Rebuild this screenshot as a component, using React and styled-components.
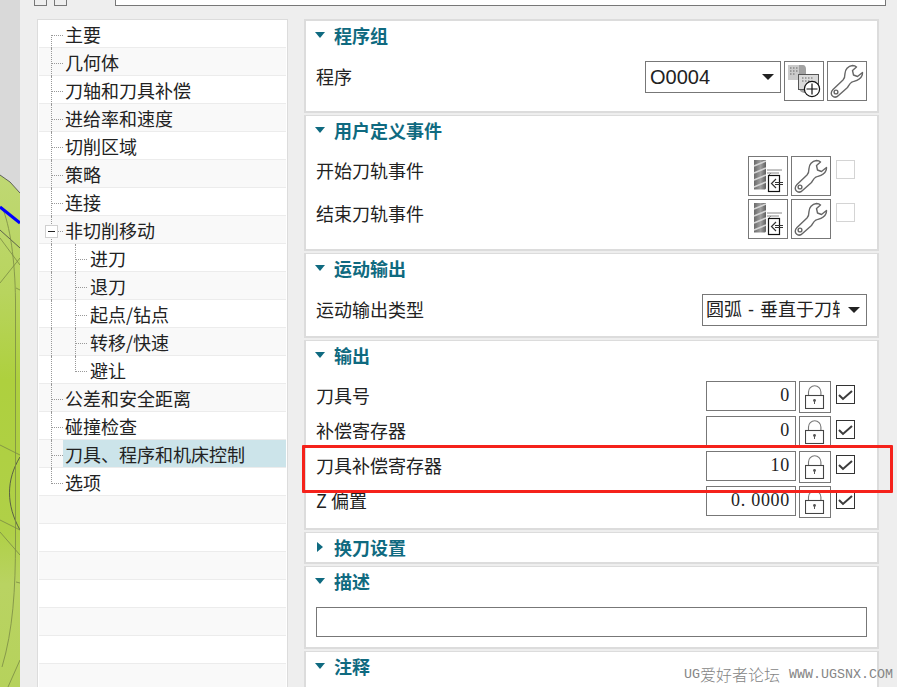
import React from "react";
import styled, { createGlobalStyle } from "styled-components";

const Global = createGlobalStyle`
  html, body { margin: 0; padding: 0; height: 100%; overflow: hidden; background: #eeeeee; }
  body { font-family: "Noto Sans CJK SC", "Liberation Sans", sans-serif; color: #1c1c1c; }
`;
const Page = styled.div`
  position: relative; width: 897px; height: 687px; display: flex; overflow: hidden; background: #eeeeee;
`;
const Canvas = styled.svg`
  flex: 0 0 20px; width: 20px; height: 687px; display: block;
`;
const Dialog = styled.div`
  flex: 1; min-width: 0; display: flex; flex-direction: column; background: #eeeeee;
`;
const TopBar = styled.div`
  height: 6px; flex: 0 0 6px; display: flex; align-items: flex-end; padding-left: 14px; gap: 7px; overflow: hidden;
`;
const TinyButton = styled.div`
  width: 11px; height: 12px; flex: none; border: 1px solid #777; background: #eee;
`;
const TopInput = styled.div`
  width: 771px; height: 10px; margin-left: 41px; flex: none; box-sizing: border-box; border: 1px solid #777; background: #fff;
`;
const Columns = styled.div`
  flex: 1; min-height: 0; display: flex; padding: 13px 0 0 17px; gap: 16px; overflow: hidden;
`;
const Tree = styled.div`
  flex: 0 0 251px; box-sizing: border-box; width: 251px; height: 670px; border: 1px solid #dcdcdc; background: #fff; padding: 0 1px; overflow: hidden;
`;
const Row = styled.div`
  position: relative; box-sizing: border-box; height: 28px; border-bottom: 1px solid #ececec;
  background: ${p => (p.$odd ? "#f9f9f9" : "#fff")};
  padding-left: ${p => (p.$sub ? 51 : 26)}px;
  font-size: 18px; line-height: 29px; white-space: nowrap; color: #222;
`;
const RowLabel = styled.span`
  display: block; height: 27px; margin-left: -2px; padding-left: 2px;
  background: ${p => (p.$selected ? "#cce4ea" : "transparent")};
`;
const Guide = styled.i`
  position: absolute; display: block; border-left: 1px dotted #999;
  left: ${p => p.$x}px; top: ${p => p.$top}px; height: ${p => p.$h}px; width: 0;
`;
const Dash = styled.i`
  position: absolute; display: block; border-top: 1px dotted #999;
  left: ${p => p.$x}px; top: 15px; width: ${p => p.$w}px; height: 0;
`;
const Expander = styled.i`
  position: absolute; left: 6px; top: 9px; width: 11px; height: 11px; border: 1px solid #d0d0d0; background: #fff; z-index: 1;
  &::after { content: ""; position: absolute; left: 2px; right: 2px; top: 5px; height: 1px; background: #222; }
`;
const Panels = styled.div`
  flex: 0 0 575px; width: 575px; display: flex; flex-direction: column; gap: 2px;
`;
const Section = styled.section`
  box-sizing: border-box; flex: none; height: ${p => p.$h}px; background: #fff; border: 1px solid #dcdcdc;
  border-width: ${p => (p.$first ? 2 : 1)}px 2px 2px 2px; padding: 0 10px; overflow: hidden;
`;
const Header = styled.div`
  display: flex; align-items: center; height: 27px; gap: 9px; margin: 0 0 13px -1px; font-size: 18px; font-weight: 700; color: #0f6a80;
`;
const Tri = styled.span`
  flex: none; width: 10px; display: flex; justify-content: center;
  ${p => p.$closed
    ? "&::before{content:'';border-left:6px solid #0f6a80;border-top:5px solid transparent;border-bottom:5px solid transparent;}"
    : "&::before{content:'';border-top:6px solid #0f6a80;border-left:5px solid transparent;border-right:5px solid transparent;}"}
`;
const Field = styled.div`
  display: flex; align-items: flex-start; justify-content: space-between; height: ${p => p.$h}px; font-size: 18px; line-height: ${p => p.$lh || 28}px; color: #222; white-space: nowrap;
`;
const Controls = styled.div`
  display: flex; align-items: flex-start; gap: 3px;
`;
const IconButton = styled.div`
  box-sizing: border-box; width: 40px; height: 40px; border: 1px solid #777; background: #fff; display: flex; align-items: center; justify-content: center; flex: none;
`;
const LockButton = styled(IconButton)`
  width: 32px; height: 32px;
`;
const Select = styled.div`
  box-sizing: border-box; width: ${p => p.$w}px; height: 32px; border: 1px solid #777; background: #fff; padding-left: ${p => p.$pl}px; padding-right: 6px; display: flex; align-items: center; font-size: ${p => p.$fs}px; line-height: 29px; color: #222; overflow: hidden; font-family: "Liberation Sans", "Noto Sans CJK SC", sans-serif;
  &::after { content: ""; flex: none; margin-left: 8px; border-top: 6px solid #222; border-left: 6px solid transparent; border-right: 6px solid transparent; }
`;
const SelectText = styled.span`
  flex: 1; min-width: 0; overflow: hidden; white-space: nowrap; word-spacing: 1px;
`;
const Check = styled.div`
  box-sizing: border-box; flex: none; width: 19px; height: 19px; margin: 4px 12px 0 2px; border: 1px solid ${p => (p.$off ? "#d4d4d4" : "#333")}; background: #fff; display: flex; align-items: center; justify-content: center;
`;
const NumBox = styled.div`
  box-sizing: border-box; width: 90px; height: 30px; border: 1px solid #777; background: #fff; text-align: right; padding-right: 5px; font-family: "Liberation Serif", "Noto Sans CJK SC", serif; font-size: 18px; letter-spacing: 0.7px; line-height: 27px; color: #222; flex: none;
`;
const TextBox = styled.div`
  box-sizing: border-box; height: 30px; border: 1px solid #777; background: #fff;
`;
const Highlight = styled.div`
  position: absolute; left: 302px; top: 445px; width: 591px; height: 48px; box-sizing: border-box; border: 3px solid #f5221b; border-radius: 1px; pointer-events: none;
`;
const Watermark = styled.div`
  position: absolute; left: 684px; top: 664px; display: flex; align-items: center; height: 20px; font-family: "Liberation Mono", monospace; font-size: 13.33px; color: #858585; white-space: pre;
`;
const WatermarkCjk = styled.span`
  font-family: "Noto Sans CJK SC", sans-serif; font-size: 16px; font-weight: 300; margin-right: 9px;
`;

const Wrench = () => (
  <svg width="34" height="34" viewBox="0 0 34 34" fill="#fff" stroke="#666" strokeWidth="1.4" strokeLinejoin="round">
    <path d="M22.5 1.5C18 2 15 5.5 15 9.5C15 12.5 15 14 13 16L3 25.5C0.5 28 1 31 2.5 32C4 33.5 6.5 33.5 8.5 31.5L17.5 23.5C19 21.5 19.5 19.5 22 18C24 17 30 17 32 11.5C32.5 10.5 32.5 9.5 32.5 8.5L27.5 12.5L23.5 11L22.5 6.5L26.5 3C25.5 2 24 1.5 22.5 1.5Z" />
    <circle cx="6" cy="28" r="1.900" />
  </svg>
);
const ProgramIcon = () => (
  <svg width="34" height="34" viewBox="0 0 34 34">
    <rect x="1" y="1" width="15" height="15" fill="#cbcbcb" />
    <path d="M12 1h4c2 0 3 2 3 4v24c-4 0-7-2-7-5z" fill="#a2a2a2" />
    <rect x="11.500" y="10.500" width="20" height="15" fill="#dadada" stroke="#555" strokeWidth="1" />
    <path d="M3 4h8M3 7h8M3 10h6M15 14h12M15 17h8" stroke="#666" strokeWidth="1" strokeDasharray="1.500 1.500" />
    <circle cx="25" cy="25" r="7.600" fill="#fff" stroke="#111" strokeWidth="1.200" />
    <path d="M25 19.500v11M19.500 25h11" stroke="#111" strokeWidth="1.200" />
  </svg>
);
const EventIcon = ({ id }) => (
  <svg width="34" height="34" viewBox="0 0 34 34">
    <defs>
      <linearGradient id={id} x1="0" x2="1" y1="0" y2="0">
        <stop offset="0" stopColor="#6a6a6a" />
        <stop offset="0.550" stopColor="#a0a0a0" />
        <stop offset="1" stopColor="#606060" />
      </linearGradient>
    </defs>
    <path d="M3 1h12v28c0 1-1 1.500-2 1.500H3z" fill={`url(#${id})`} />
    <path d="M3 7l12-5M3 14l12-5M3 21l12-5M3 28l12-5" stroke="#d6d6d6" strokeWidth="1.500" />
    <path d="M16 11h15M16 14h12M17 17l3-3" stroke="#888" strokeWidth="1" fill="none" />
    <rect x="17.500" y="16.500" width="11" height="16" fill="#fff" stroke="#111" strokeWidth="1.200" />
    <path d="M32 23.500h-8M32 25.500h-8M25 20l-4.500 4.500 4.500 4.500" fill="#fff" stroke="#333" strokeWidth="1.200" />
  </svg>
);
const Lock = () => (
  <svg width="20" height="24" viewBox="0 0 20 24" fill="none">
    <path d="M3.500 10V7a6.200 6.200 0 0 1 12.400 0v3" stroke="#777" strokeWidth="1.100" />
    <rect x="0.500" y="10.500" width="18" height="13" fill="#fff" stroke="#444" strokeWidth="1.100" />
    <circle cx="9.500" cy="15.500" r="1.400" fill="#555" />
    <path d="M9.500 16v3" stroke="#555" />
  </svg>
);
const Tick = () => (
  <svg width="15" height="12" viewBox="0 0 15 12" fill="none">
    <path d="M1 6l4 4L14 2" stroke="#3c3c3c" strokeWidth="2" />
  </svg>
);

const treeItems = [
  ["主要"], ["几何体"], ["刀轴和刀具补偿"], ["进给率和速度"], ["切削区域"], ["策略"], ["连接"],
  ["非切削移动", "open"], ["进刀", "sub"], ["退刀", "sub"], ["起点/钻点", "sub"], ["转移/快速", "sub"], ["避让", "sub"],
  ["公差和安全距离"], ["碰撞检查"], ["刀具、程序和机床控制", "sel"], ["选项"],
  [], [], [], [], [], [], [],
];
const lastTop = 16;
const lastSub = 12;

function TreeRow({ item, i }) {
  const [label, kind] = item;
  const sub = kind === "sub";
  return (
    <Row $odd={i % 2 === 1} $sub={sub}>
      {label && i <= lastTop && <Guide $x={12} $top={i === 0 ? 15 : 0} $h={i === 0 ? 13 : i === lastTop ? 16 : 28} />}
      {sub && <Guide $x={36} $top={0} $h={i === lastSub ? 16 : 28} />}
      {label && !sub && kind !== "open" && <Dash $x={13} $w={11} />}
      {sub && <Dash $x={37} $w={11} />}
      {kind === "open" && <Dash $x={19} $w={5} />}
      {kind === "open" && <Expander />}
      {label && <RowLabel $selected={kind === "sel"}>{label}</RowLabel>}
    </Row>
  );
}

const Num = ({ v }) => (
  <Controls>
    <NumBox>{v}</NumBox>
    <LockButton><Lock /></LockButton>
    <Check><Tick /></Check>
  </Controls>
);

export default function App() {
  return (
    <Page>
      <Global />
      <Canvas viewBox="0 0 20 687">
        <defs>
          <linearGradient id="surface" x1="0" x2="0" y1="175" y2="687" gradientUnits="userSpaceOnUse">
            <stop offset="0" stopColor="#bfd873" />
            <stop offset="0.230" stopColor="#b8d45e" />
            <stop offset="0.400" stopColor="#aed03e" />
            <stop offset="0.700" stopColor="#b0d048" />
            <stop offset="0.800" stopColor="#b9d362" />
            <stop offset="1" stopColor="#b6d25c" />
          </linearGradient>
        </defs>
        <rect width="20" height="687" fill="#d9d9d9" />
        <path d="M0 175L10 182L20 193V687H0Z" fill="url(#surface)" />
        <path d="M0 175L10 182L20 193M0 230L20 248M20 457C6 480 6 505 20 530" fill="none" stroke="#444" strokeWidth="0.800" />
        <path d="M0 238L20 265M0 283L20 258M0 445L20 455M0 520L20 530M0 532L20 555M2 207C10 225 15 260 15.500 300V540C15.500 590 13 630 2 667M8 687L20 660M16 288L20 290M16 582L20 583" fill="none" stroke="#7a8a45" strokeWidth="0.800" />
        <path d="M0 207L20 223" stroke="#0000ff" strokeWidth="3" />
      </Canvas>
      <Dialog>
        <TopBar>
          <TinyButton />
          <TinyButton />
          <TopInput />
        </TopBar>
        <Columns>
          <Tree>
            {treeItems.map((item, i) => <TreeRow key={i} item={item} i={i} />)}
          </Tree>
          <Panels>
            <Section $h={94} $first>
              <Header><Tri />程序组</Header>
              <Field $h={40} $lh={30}>
                程序
                <Controls>
                  <Select $w={136} $pl={4} $fs={20}><SelectText>O0004</SelectText></Select>
                  <IconButton><ProgramIcon /></IconButton>
                  <IconButton><Wrench /></IconButton>
                </Controls>
              </Field>
            </Section>
            <Section $h={136}>
              <Header><Tri />用户定义事件</Header>
              <Field $h={43}>
                开始刀轨事件
                <Controls>
                  <IconButton><EventIcon id="mill-a" /></IconButton>
                  <IconButton><Wrench /></IconButton>
                  <Check $off />
                </Controls>
              </Field>
              <Field $h={43}>
                结束刀轨事件
                <Controls>
                  <IconButton><EventIcon id="mill-b" /></IconButton>
                  <IconButton><Wrench /></IconButton>
                  <Check $off />
                </Controls>
              </Field>
            </Section>
            <Section $h={85}>
              <Header><Tri />运动输出</Header>
              <Field $h={32} $lh={30}>
                运动输出类型
                <Select $w={165} $pl={3} $fs={18}><SelectText>圆弧 - 垂直于刀轴</SelectText></Select>
              </Field>
            </Section>
            <Section $h={190}>
              <Header><Tri />输出</Header>
              <Field $h={35}>刀具号<Num v="0" /></Field>
              <Field $h={35}>补偿寄存器<Num v="0" /></Field>
              <Field $h={35}>刀具补偿寄存器<Num v="10" /></Field>
              <Field $h={35}>Z 偏置<Num v="0. 0000" /></Field>
            </Section>
            <Section $h={32}>
              <Header><Tri $closed />换刀设置</Header>
            </Section>
            <Section $h={83}>
              <Header><Tri />描述</Header>
              <TextBox />
            </Section>
            <Section $h={60}>
              <Header><Tri />注释</Header>
            </Section>
          </Panels>
        </Columns>
      </Dialog>
      <Highlight />
      <Watermark>UG<WatermarkCjk>爱好者论坛</WatermarkCjk>WWW.UGSNX.COM</Watermark>
    </Page>
  );
}
